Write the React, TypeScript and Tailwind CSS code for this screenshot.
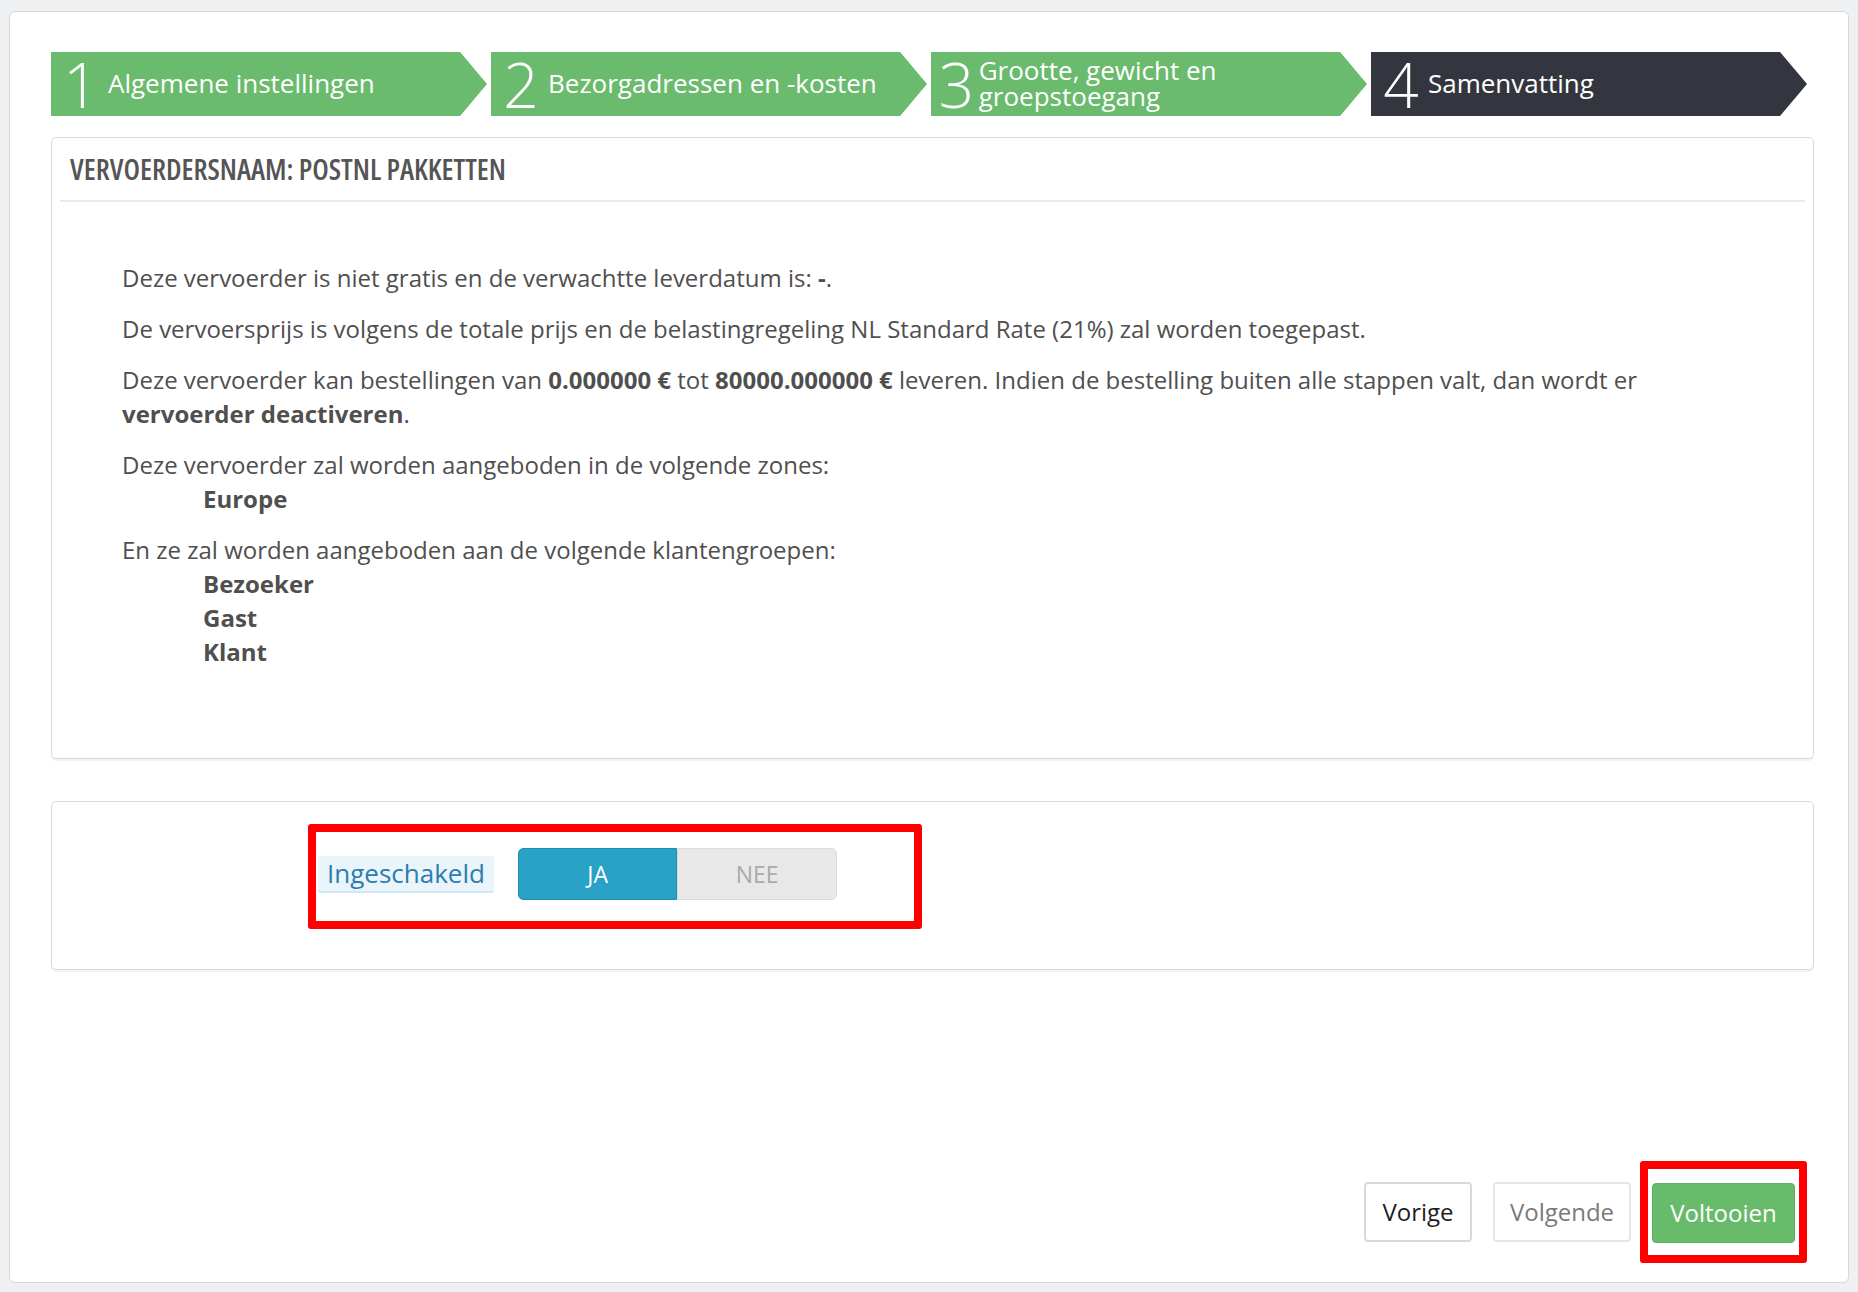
const STEPS = [
  { n: "1", label: "Algemene instellingen", active: false },
  { n: "2", label: "Bezorgadressen en -kosten", active: false },
  { n: "3", label: "Grootte, gewicht en groepstoegang", active: false },
  { n: "4", label: "Samenvatting", active: true },
];

function Step({ n, label, active }: { n: string; label: string; active: boolean }) {
  return (
    <div className="flex h-[64px] w-[436px] shrink-0">
      <div
        className={
          "flex flex-1 items-center pl-[6px] text-white " +
          (active ? "bg-[#33363e]" : "bg-[#6abb6e]")
        }
      >
        <span className="w-[48px] text-center text-[62px] font-[350] leading-none">{n}</span>
        <span className="pl-[3px] pr-[18px] pb-[2px] text-[26px] leading-[26px]">{label}</span>
      </div>
      <div
        className={
          "h-0 w-0 border-y-[32px] border-l-[27px] border-y-transparent " +
          (active ? "border-l-[#33363e]" : "border-l-[#6abb6e]")
        }
      />
    </div>
  );
}

export default function App() {
  return (
    <div className="min-h-[1292px] bg-[#eef0f2] px-[9px] pt-[11px] pb-[9px] font-['Open_Sans',sans-serif] text-[#4f4f4f]">
      <div className="flex min-h-[1272px] flex-col rounded-[6px] border border-[#d4d8db] bg-white pl-[41px] pr-[34px] pt-[40px] pb-[19px]">
        <div className="flex gap-[4px]">
          {STEPS.map((s) => (
            <Step key={s.n} {...s} />
          ))}
        </div>

        <div className="mt-[21px] rounded-[5px] border border-[#d6dadd] px-[8px] pb-[89px] shadow-[0_2px_0_rgba(0,0,0,0.05)]">
          <div className="flex h-[64px] items-center border-b-2 border-[#e8eaeb] px-[10px] text-[29px] font-semibold uppercase text-[#555] [font-stretch:semi-condensed]">
            Vervoerdersnaam: PostNL Pakketten
          </div>
          <div className="pt-[59px] pl-[62px] pr-[120px] text-[24px] leading-[34px]">
            <p className="mb-[17px]">
              Deze vervoerder is niet gratis en de verwachtte leverdatum is: <b>-</b>.
            </p>
            <p className="mb-[17px]">
              De vervoersprijs is volgens de totale prijs en de belastingregeling NL Standard Rate (21%) zal worden toegepast.
            </p>
            <p className="mb-[17px]">
              Deze vervoerder kan bestellingen van <b>0.000000 €</b> tot <b>80000.000000 €</b> leveren. Indien de
              bestelling buiten alle stappen valt, dan wordt er <b>vervoerder deactiveren</b>.
            </p>
            <div className="mb-[17px]">
              <p>Deze vervoerder zal worden aangeboden in de volgende zones:</p>
              <ul className="pl-[81px] font-bold">
                <li>Europe</li>
              </ul>
            </div>
            <div>
              <p>En ze zal worden aangeboden aan de volgende klantengroepen:</p>
              <ul className="pl-[81px] font-bold">
                <li>Bezoeker</li>
                <li>Gast</li>
                <li>Klant</li>
              </ul>
            </div>
          </div>
        </div>

        <div className="mt-[42px] h-[169px] rounded-[5px] border border-[#d6dadd] pt-[22px] shadow-[0_2px_0_rgba(0,0,0,0.05)]">
          <div className="ml-[256px] flex h-[105px] w-[614px] items-center rounded-[3px] border-8 border-[#ff0000] pl-[2px] pb-[5px]">
            <span className="flex h-[37px] items-center rounded-[3px] border-b-2 border-[#cfe6f5] bg-[#e9f4fb] px-[9px] text-[26px] text-[#2e7cae]">
              Ingeschakeld
            </span>
            <div className="ml-[24px] flex h-[52px] w-[319px] overflow-hidden rounded-[5px] text-[23px]">
              <div className="flex w-1/2 items-center justify-center rounded-l-[5px] border border-[#1f8db0] bg-[#28a2c7] text-white">
                JA
              </div>
              <div className="flex w-1/2 items-center justify-center rounded-r-[5px] border border-[#dcdcdc] bg-[#e8e8e8] text-[#aaa]">
                NEE
              </div>
            </div>
          </div>
        </div>

        <div className="mt-auto flex items-center justify-end pr-[7px] text-[24px]">
          <button className="h-[60px] w-[108px] rounded-[4px] border-2 border-[#d9d9d9] bg-white text-[#1e1e1e]">
            Vorige
          </button>
          <button className="ml-[21px] h-[60px] w-[138px] rounded-[4px] border-2 border-[#e6e6e6] bg-white text-[#7a7a7a]">
            Volgende
          </button>
          <div className="ml-[9px] rounded-[3px] border-8 border-[#ff0000] px-[4px] pt-[14px] pb-[12px]">
            <button className="h-[60px] w-[143px] rounded-[4px] border border-[#5cae60] bg-[#67bb6b] text-white">
              Voltooien
            </button>
          </div>
        </div>
      </div>
    </div>
  );
}
